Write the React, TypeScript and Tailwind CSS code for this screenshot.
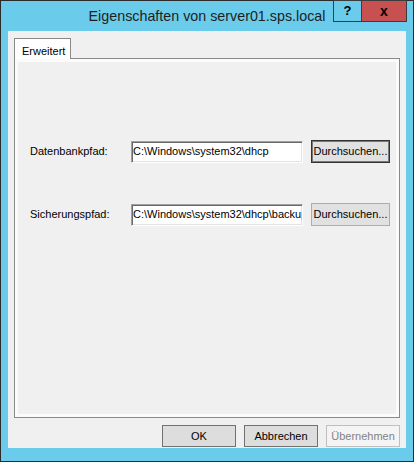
const ui = "font-['Liberation_Sans',Arial,sans-serif] text-[11px] text-black"

function PathRow({ label, value, focused }: { label: string; value: string; focused?: boolean }) {
  return (
    <div className="flex h-[23px] items-center">
      <span className="w-[113px] pl-[12px]">{label}</span>
      <div className="flex h-[22px] w-[172px] items-center overflow-hidden whitespace-nowrap border border-[#a0a0a0] border-b-white border-r-white bg-white pl-[1px] shadow-[inset_1px_1px_0_#696969,inset_-1px_-1px_0_#e3e3e3]">
        {value}
      </div>
      <button
        className={
          focused
            ? "ml-[8px] h-[23px] w-[79px] border border-[#333333] bg-[#e1e1e1] text-center shadow-[inset_0_0_0_1px_#7a7a7a]"
            : "ml-[8px] h-[23px] w-[79px] border border-[#adadad] bg-[#e1e1e1] text-center"
        }
      >
        Durchsuchen...
      </button>
    </div>
  )
}

export default function App() {
  return (
    <div className={`${ui} flex h-[462px] w-[414px] flex-col border border-[#2b2b2b] bg-[#6bcbea]`}>
      {/* title bar */}
      <div className="relative h-[30px] shrink-0">
        <div className="pt-[5px] text-center font-['Liberation_Sans',Arial,sans-serif] text-[14.3px] text-[#1e1e1e]">
          Eigenschaften von server01.sps.local
        </div>
        <div className="absolute right-[6px] top-[-1px] flex">
          <div className="flex h-[22px] w-[29px] items-center justify-center border border-[#3c3c3c] bg-[#6bcbea] text-[13px] font-bold">
            ?
          </div>
          <div className="-ml-px flex h-[22px] w-[46px] items-center justify-center border border-[#3c3c3c] bg-[#c75050] text-[14px] font-bold leading-none">
            x
          </div>
        </div>
      </div>

      {/* client area */}
      <div className="mx-[7px] flex h-[417px] flex-col bg-[#f0f0f0] px-[6px] pt-[7px]">
        <div className="relative z-10 -mb-px flex h-[21px] w-[57px] items-start border border-b-0 border-[#898989] bg-white pl-[7px] pt-[4px]">
          Erweitert
        </div>
        <div className="h-[360px] border border-[#898989] bg-[#fbfbfb] p-[3px]">
          <div className="flex h-full flex-col gap-[40px] bg-[#f0f0f0] pt-[78px]">
            <PathRow label="Datenbankpfad:" value="C:\Windows\system32\dhcp" focused />
            <PathRow label="Sicherungspfad:" value="C:\Windows\system32\dhcp\backup" />
          </div>
        </div>
        <div className="mt-[7px] flex justify-end gap-[8px]">
          <button className="h-[22px] w-[74px] border border-[#707070] bg-[#dddddd]">OK</button>
          <button className="h-[22px] w-[74px] border border-[#707070] bg-[#dddddd]">Abbrechen</button>
          <button className="h-[22px] w-[74px] border border-[#bfbfbf] bg-[#f4f4f4] text-[#838383]">
            Übernehmen
          </button>
        </div>
      </div>
    </div>
  )
}
